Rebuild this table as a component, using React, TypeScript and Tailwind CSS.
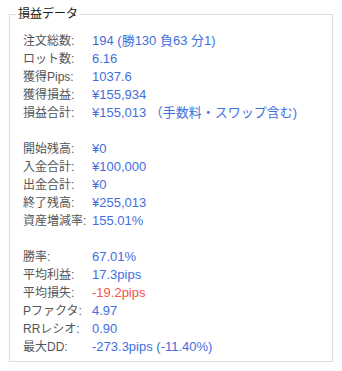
import React from 'react';

type Row = { label: string; value: string; red?: boolean } | null;

const rows: Row[] = [
  { label: '注文総数:', value: '194 (勝130 負63 分1)' },
  { label: 'ロット数:', value: '6.16' },
  { label: '獲得Pips:', value: '1037.6' },
  { label: '獲得損益:', value: '¥155,934' },
  { label: '損益合計:', value: '¥155,013 （手数料・スワップ含む)' },
  null,
  { label: '開始残高:', value: '¥0' },
  { label: '入金合計:', value: '¥100,000' },
  { label: '出金合計:', value: '¥0' },
  { label: '終了残高:', value: '¥255,013' },
  { label: '資産増減率:', value: '155.01%' },
  null,
  { label: '勝率:', value: '67.01%' },
  { label: '平均利益:', value: '17.3pips' },
  { label: '平均損失:', value: '-19.2pips', red: true },
  { label: 'Pファクタ:', value: '4.97' },
  { label: 'RRレシオ:', value: '0.90' },
  { label: '最大DD:', value: '-273.3pips (-11.40%)' },
];

export default function App() {
  return (
    <div
      className="bg-white w-[342px] h-[371px] px-[9px] pt-[5px] text-[13px] leading-[18px]"
      style={{ fontFamily: '"Liberation Sans", "Noto Sans CJK JP", sans-serif' }}
    >
      <fieldset className="border border-[#dddddd] px-[6px] pb-[4px] h-[357px]">
        <legend className="px-[2px] text-[12px] text-[#1a1a1a]">損益データ</legend>
        <div className="ml-[7px] pt-[9px]">
          {rows.map((r, i) =>
            r ? (
              <div key={i} className="grid grid-cols-[69px_1fr] h-[18px] whitespace-nowrap">
                <span className="text-[12px] text-[#555555]">{r.label}</span>
                <span className={r.red ? 'text-[#f5564a]' : 'text-[#3f6ee0]'}>{r.value}</span>
              </div>
            ) : (
              <div key={i} className="h-[18px]" />
            ),
          )}
        </div>
      </fieldset>
    </div>
  );
}
